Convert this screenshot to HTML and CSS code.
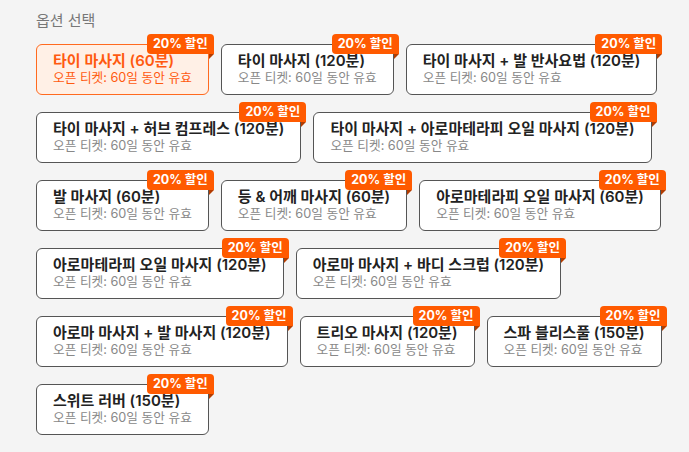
FILE: index.html
```html
<!DOCTYPE html>
<html lang="ko">
<head>
<meta charset="utf-8">
<link rel="stylesheet" href="styles.css">
</head>
<body>
<div class="wrap">
  <div class="heading">옵션 선택</div>
  <div class="options">
    <div class="opt selected"><div class="name">타이 마사지 (60분)</div><div class="sub">오픈 티켓: 60일 동안 유효</div><span class="badge">20% 할인</span></div>
    <div class="opt"><div class="name">타이 마사지 (120분)</div><div class="sub">오픈 티켓: 60일 동안 유효</div><span class="badge">20% 할인</span></div>
    <div class="opt"><div class="name">타이 마사지 + 발 반사요법 (120분)</div><div class="sub">오픈 티켓: 60일 동안 유효</div><span class="badge">20% 할인</span></div>
    <div class="opt"><div class="name">타이 마사지 + 허브 컴프레스 (120분)</div><div class="sub">오픈 티켓: 60일 동안 유효</div><span class="badge">20% 할인</span></div>
    <div class="opt"><div class="name">타이 마사지 + 아로마테라피 오일 마사지 (120분)</div><div class="sub">오픈 티켓: 60일 동안 유효</div><span class="badge">20% 할인</span></div>
    <div class="opt"><div class="name">발 마사지 (60분)</div><div class="sub">오픈 티켓: 60일 동안 유효</div><span class="badge">20% 할인</span></div>
    <div class="opt"><div class="name">등 &amp; 어깨 마사지 (60분)</div><div class="sub">오픈 티켓: 60일 동안 유효</div><span class="badge">20% 할인</span></div>
    <div class="opt"><div class="name">아로마테라피 오일 마사지 (60분)</div><div class="sub">오픈 티켓: 60일 동안 유효</div><span class="badge">20% 할인</span></div>
    <div class="opt"><div class="name">아로마테라피 오일 마사지 (120분)</div><div class="sub">오픈 티켓: 60일 동안 유효</div><span class="badge">20% 할인</span></div>
    <div class="opt"><div class="name">아로마 마사지 + 바디 스크럽 (120분)</div><div class="sub">오픈 티켓: 60일 동안 유효</div><span class="badge">20% 할인</span></div>
    <div class="opt"><div class="name">아로마 마사지 + 발 마사지 (120분)</div><div class="sub">오픈 티켓: 60일 동안 유효</div><span class="badge">20% 할인</span></div>
    <div class="opt"><div class="name">트리오 마사지 (120분)</div><div class="sub">오픈 티켓: 60일 동안 유효</div><span class="badge">20% 할인</span></div>
    <div class="opt"><div class="name">스파 블리스풀 (150분)</div><div class="sub">오픈 티켓: 60일 동안 유효</div><span class="badge">20% 할인</span></div>
    <div class="opt"><div class="name">스위트 러버 (150분)</div><div class="sub">오픈 티켓: 60일 동안 유효</div><span class="badge">20% 할인</span></div>
  </div>
</div>
</body>
</html>
```

FILE: styles.css
```css
html, body {
  margin: 0;
  padding: 0;
  background: #f4f4f4;
}
body {
  font-family: Inter, "Noto Sans CJK KR", sans-serif;
  color: #222;
}
.wrap {
  padding: 12px 22px 0 36px;
}
.heading {
  font-size: 15px;
  line-height: 18px;
  color: #777;
  margin-bottom: 14px;
}
.options {
  display: flex;
  flex-wrap: wrap;
  column-gap: 12px;
  row-gap: 17px;
}
.opt {
  position: relative;
  background: #fff;
  border: 1px solid #555;
  border-radius: 6px;
  padding: 7px 16px 8px 16px;
}
.name {
  font-size: 15px;
  font-weight: 600;
  line-height: 18px;
  color: #222;
  white-space: nowrap;
}
.sub {
  font-size: 12.7px;
  line-height: 16px;
  color: #888;
  white-space: nowrap;
}
.opt.selected {
  background: #fff0e6;
  border-color: #ff6a1f;
}
.opt.selected .name,
.opt.selected .sub {
  color: #ff5a10;
}
.badge {
  position: absolute;
  top: -11px;
  right: -6px;
  background: #ff5a00;
  color: #fff;
  font-size: 12.5px;
  font-weight: 700;
  line-height: 20px;
  padding: 0 6px;
  border-radius: 4px 4px 0 4px;
  white-space: nowrap;
}
.badge::after {
  content: "";
  position: absolute;
  right: 0;
  top: 100%;
  width: 0;
  height: 0;
  border-top: 5px solid #b33c00;
  border-right: 5px solid transparent;
}
```
